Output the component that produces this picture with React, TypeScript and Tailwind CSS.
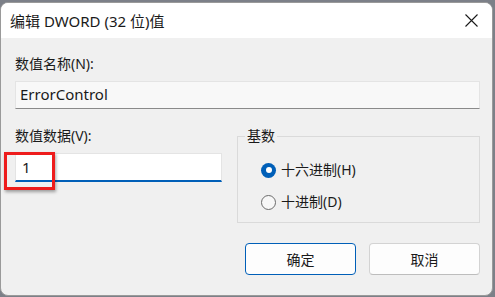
const font = { fontFamily: '"Noto Sans", "Noto Sans CJK SC", sans-serif' };

const CloseIcon = () => (
  <svg width="13" height="13" viewBox="0 0 13 13" className="text-[#1a1a1a]">
    <path d="M0.5 0.5 L12.5 12.5 M12.5 0.5 L0.5 12.5" stroke="currentColor" strokeWidth="1.1" fill="none" />
  </svg>
);

const Radio = ({ checked, label }: { checked?: boolean; label: string }) => (
  <div className="flex items-center gap-[5px] h-[20px]">
    {checked ? (
      <span className="w-[15px] h-[15px] rounded-full bg-[#005fb8] flex items-center justify-center">
        <span className="w-[6px] h-[6px] rounded-full bg-white" />
      </span>
    ) : (
      <span className="w-[15px] h-[15px] rounded-full border border-[#6b6b6b] bg-[#f7f7f7]" />
    )}
    <span className="text-[14px] leading-[20px] text-[#1a1a1a]">{label}</span>
  </div>
);

export default function App() {
  return (
    <div className="w-[495px] h-[297px] bg-[#7c8088] overflow-hidden" style={font}>
      <div className="mt-[2px] w-[493px] h-[294px] rounded-[8px] border border-[#9a9a9a] bg-[#f0f0f0] overflow-hidden flex flex-col">
        {/* title bar */}
        <div className="h-[35px] bg-white flex items-center justify-between pl-[9px] pr-[14px] shrink-0">
          <span className="text-[15px] leading-[20px] text-[#1a1a1a] mt-[1px]">编辑 DWORD (32 位)值</span>
          <CloseIcon />
        </div>

        {/* body */}
        <div className="flex flex-col pl-[14px] pr-[12px] pt-[16px]">
          <div className="text-[14px] leading-[20px] text-[#1a1a1a]">数值名称(N):</div>
          <div className="mt-[7px] h-[28px] bg-[#f8f8f8] border border-[#e4e4e4] border-b-[#8a8a8a] flex items-center pl-[4px]">
            <span className="text-[15px] leading-[20px] text-[#1a1a1a] mb-[2px]">ErrorControl</span>
          </div>

          <div className="flex gap-[15px] mt-[17px]">
            <div className="w-[207px] flex flex-col">
              <div className="text-[14px] leading-[20px] text-[#1a1a1a]">数值数据(V):</div>
              <div className="relative mt-[7px] h-[29px] bg-white border border-[#e4e4e4] border-b-2 border-b-[#005fb8] flex items-center pl-[6px]">
                <span className="text-[15px] leading-[20px] text-[#1a1a1a]">1</span>
                <div className="absolute left-[-12px] top-[-2px] w-[51px] h-[38px] border-[3px] border-[#ee1c1c] shadow-[1px_2px_3px_rgba(0,0,0,0.35)]" />
              </div>
            </div>

            <fieldset className="flex-1 h-[97px] border border-[#dadada] px-0 pt-[14px]">
              <legend className="ml-[7px] px-[2px] text-[14px] leading-[20px] text-[#1a1a1a]">基数</legend>
              <div className="flex flex-col gap-[12px] pl-[23px]">
                <Radio checked label="十六进制(H)" />
                <Radio label="十进制(D)" />
              </div>
            </fieldset>
          </div>

          <div className="flex justify-end gap-[13px] mt-[20px]">
            <button className="w-[111px] h-[32px] rounded-[4px] bg-[#fdfdfd] border border-[#005fb8] text-[14px] text-[#1a1a1a]">
              确定
            </button>
            <button className="w-[111px] h-[32px] rounded-[4px] bg-[#fdfdfd] border border-[#d3d3d3] border-b-[#bdbdbd] text-[14px] text-[#1a1a1a]">
              取消
            </button>
          </div>
        </div>
      </div>
    </div>
  );
}
